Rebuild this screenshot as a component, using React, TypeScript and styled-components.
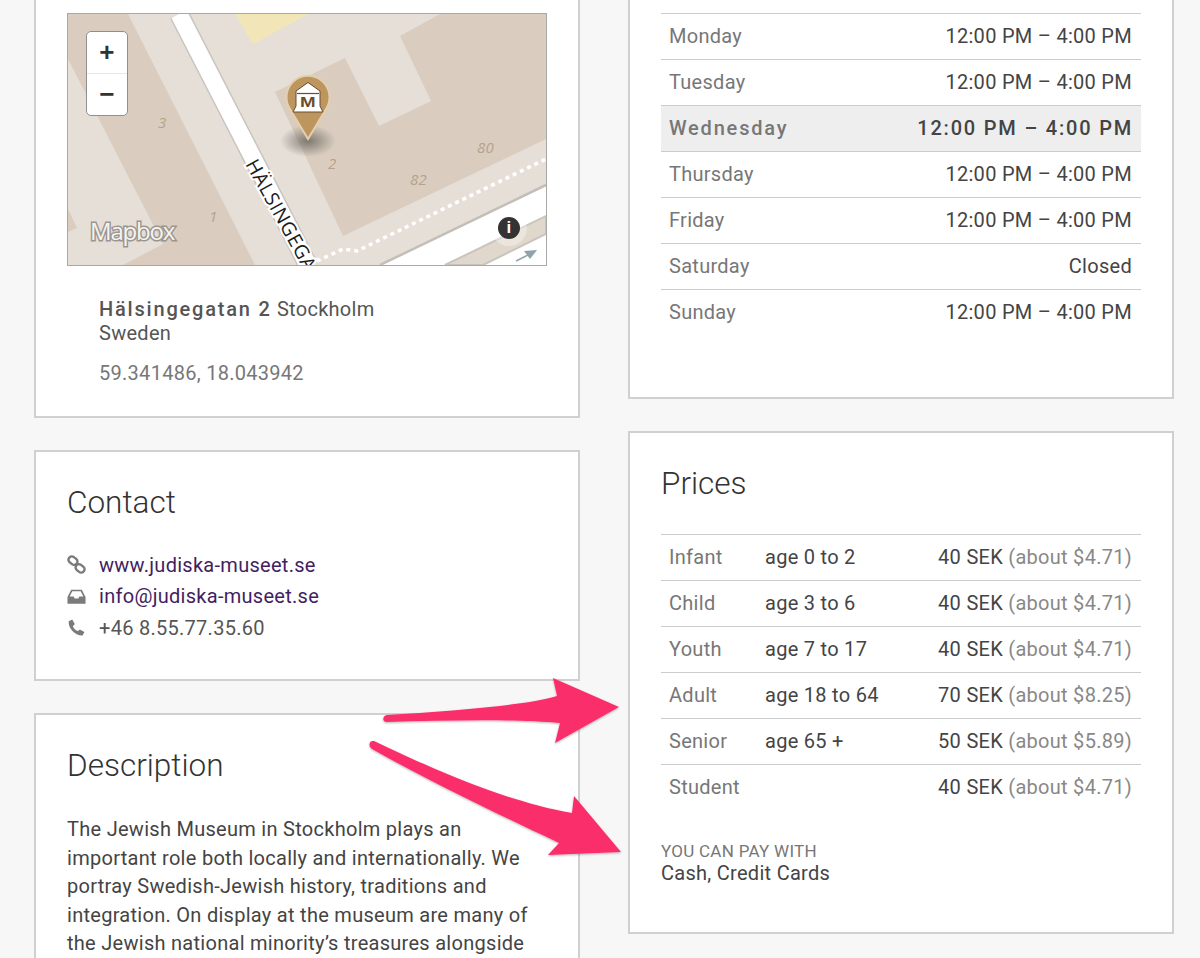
import React from "react";
import styled, { createGlobalStyle } from "styled-components";

const hours = [
  { day: "Monday", time: "12:00 PM – 4:00 PM" },
  { day: "Tuesday", time: "12:00 PM – 4:00 PM" },
  { day: "Wednesday", time: "12:00 PM – 4:00 PM", today: true },
  { day: "Thursday", time: "12:00 PM – 4:00 PM" },
  { day: "Friday", time: "12:00 PM – 4:00 PM" },
  { day: "Saturday", time: "Closed" },
  { day: "Sunday", time: "12:00 PM – 4:00 PM" },
];

const prices = [
  { name: "Infant", age: "age 0 to 2", price: "40 SEK", about: "(about $4.71)" },
  { name: "Child", age: "age 3 to 6", price: "40 SEK", about: "(about $4.71)" },
  { name: "Youth", age: "age 7 to 17", price: "40 SEK", about: "(about $4.71)" },
  { name: "Adult", age: "age 18 to 64", price: "70 SEK", about: "(about $8.25)" },
  { name: "Senior", age: "age 65 +", price: "50 SEK", about: "(about $5.89)" },
  { name: "Student", age: "", price: "40 SEK", about: "(about $4.71)" },
];

function MapDrawing() {
  return (
    <MapSvg viewBox="0 0 478 251" preserveAspectRatio="none">
      <rect width="478" height="251" fill="#e6dfd8" />
      <polygon points="0,0 60,0 187,251 55,251 95,230 0,45" fill="#dacdbf" />
      <polygon points="0,195 9,214 0,218" fill="#dacdbf" />
      <polygon points="167,0 240,0 185,30" fill="#f2e6b8" />
      <polygon points="207,78 277,44 311,112 363,87 332,22 372,0 478,0 478,125 275,222" fill="#dacdbf" />
      <line x1="111" y1="0" x2="240" y2="251" stroke="#c9c4bd" strokeWidth="20" />
      <line x1="111" y1="0" x2="240" y2="251" stroke="#ffffff" strokeWidth="17" />
      <polygon points="312,251 478,171 478,251" fill="#ffffff" />
      <polyline points="312,251 478,171" fill="none" stroke="#c3bfb8" strokeWidth="2.5" />
      <polyline points="249,247 275,235 289,237 478,145" fill="none" stroke="#ffffff" strokeWidth="3.5" strokeDasharray="4 4" />
      <polygon points="377,251 478,202 478,220 415,251" fill="#e0d8cd" stroke="#c9c4bd" strokeWidth="2" />
      <line x1="448" y1="247" x2="464" y2="239" stroke="#8ea3ab" strokeWidth="1.5" />
      <polygon points="469,236 456,237 462,245" fill="#8ea3ab" />
      <MapLabel x="90" y="114">3</MapLabel>
      <MapLabel x="141" y="208">1</MapLabel>
      <MapLabel x="260" y="155">2</MapLabel>
      <MapLabel x="342" y="171">82</MapLabel>
      <MapLabel x="409" y="139">80</MapLabel>
      <StreetLabel transform="translate(177 150) rotate(61)">HÄLSINGEGA</StreetLabel>
      <MapboxMark x="22" y="226">Mapbox</MapboxMark>
    </MapSvg>
  );
}

function Pin() {
  return (
    <PinSvg viewBox="0 0 56 84">
      <defs>
        <radialGradient id="pinShadow">
          <stop offset="0%" stopColor="#6f6a62" stopOpacity="0.85" />
          <stop offset="100%" stopColor="#6f6a62" stopOpacity="0" />
        </radialGradient>
      </defs>
      <ellipse cx="28" cy="69" rx="28" ry="16" fill="url(#pinShadow)" />
      <path d="M28 67 L10 37 A21.5 21.5 0 1 1 46 37 Z" fill="#bd955e" stroke="#e4cfae" strokeWidth="2" />
      <path d="M28 10.5 L40 19 V34 L43 40 H13 L16 34 V19 Z" fill="#ffffff" stroke="#6b4d2c" strokeWidth="1" />
      <path d="M17 21.5 H39" stroke="#6b4d2c" strokeWidth="1.2" />
      <PinLetter x="28" y="35" textLength="16" lengthAdjust="spacingAndGlyphs">M</PinLetter>
    </PinSvg>
  );
}

function LinkIcon() {
  return (
    <ContactSvg viewBox="0 0 20 20">
      <g fill="none" stroke="#7b7b7b" strokeWidth="2.6">
        <rect x="1.2" y="2.4" width="10" height="7" rx="3.5" transform="rotate(38 6.2 6)" />
        <rect x="8.8" y="10.6" width="10" height="7" rx="3.5" transform="rotate(38 13.8 14)" />
      </g>
    </ContactSvg>
  );
}

function InboxIcon() {
  return (
    <ContactSvg viewBox="0 0 20 20">
      <path d="M4.4 3 H15.6 L19.5 10.5 V17.5 H0.5 V10.5 Z M5.6 4.6 L2.8 10 H7 L8 12 H12 L13 10 H17.2 L14.4 4.6 Z" fill="#7b7b7b" fillRule="evenodd" />
    </ContactSvg>
  );
}

function PhoneIcon() {
  return (
    <ContactSvg viewBox="0 0 20 20">
      <path d="M5.5 1.5 L8.2 6.4 L6.2 8.6 C7 11 9.2 13 11.6 13.8 L13.6 12 L18.4 14.8 L16.4 18.4 C9 19 1 11 1.8 3.4 Z" fill="#7b7b7b" />
    </ContactSvg>
  );
}

function Arrows() {
  return (
    <ArrowSvg viewBox="0 0 1200 958">
      <defs>
        <filter id="arrowShadow" x="-5%" y="-5%" width="110%" height="110%">
          <feDropShadow dx="0" dy="1" stdDeviation="0.8" floodColor="#000" floodOpacity="0.3" />
        </filter>
      </defs>
      <g fill="#fb2e6c" filter="url(#arrowShadow)">
        <path d="M387 715 C450 711 530 705 557 696 L553 678 L619 707 L555 743 L560 723 C520 719 450 720 387 722 C382 722 382 716 387 715 Z" />
        <path d="M374 741 C430 768 510 803 572 813 L574 796 L621 852 L548 855 L559 843 C500 815 430 782 372 749 C368 746 369 740 374 741 Z" />
      </g>
    </ArrowSvg>
  );
}

export default function App() {
  return (
    <Page>
      <GlobalStyle />
      <Columns>
        <Column>
          <MapCard>
            <MapFrame>
              <MapDrawing />
              <ZoomControl>
                <ZoomButton>+</ZoomButton>
                <ZoomButton>−</ZoomButton>
              </ZoomControl>
              <PinSlot>
                <Pin />
              </PinSlot>
              <InfoBadge>i</InfoBadge>
            </MapFrame>
            <Address>
              <Street>Hälsingegatan 2</Street> Stockholm
              <br />
              Sweden
              <Coords>59.341486, 18.043942</Coords>
            </Address>
          </MapCard>
          <ContactCard>
            <Heading>Contact</Heading>
            <ContactList>
              <ContactRow>
                <LinkIcon />
                <ContactLink>www.judiska-museet.se</ContactLink>
              </ContactRow>
              <ContactRow>
                <InboxIcon />
                <ContactLink>info@judiska-museet.se</ContactLink>
              </ContactRow>
              <ContactRow>
                <PhoneIcon />
                <span>+46 8.55.77.35.60</span>
              </ContactRow>
            </ContactList>
          </ContactCard>
          <DescriptionCard>
            <Heading>Description</Heading>
            <Description>
              The Jewish Museum in Stockholm plays an
              <br />
              important role both locally and internationally. We
              <br />
              portray Swedish-Jewish history, traditions and
              <br />
              integration. On display at the museum are many of
              <br />
              the Jewish national minority’s treasures alongside
            </Description>
          </DescriptionCard>
        </Column>
        <Column>
          <HoursCard>
            <Table>
              {hours.map((h) => (
                <HoursRow key={h.day} $today={h.today}>
                  <RowLabel>{h.day}</RowLabel>
                  <span>{h.time}</span>
                </HoursRow>
              ))}
            </Table>
          </HoursCard>
          <PricesCard>
            <Heading>Prices</Heading>
            <PriceTable>
              {prices.map((p) => (
                <PriceRow key={p.name}>
                  <RowLabel>{p.name}</RowLabel>
                  <span>{p.age}</span>
                  <PriceCell>
                    {p.price} <About>{p.about}</About>
                  </PriceCell>
                </PriceRow>
              ))}
            </PriceTable>
            <PayLabel>YOU CAN PAY WITH</PayLabel>
            <PayValue>Cash, Credit Cards</PayValue>
          </PricesCard>
        </Column>
      </Columns>
      <Arrows />
    </Page>
  );
}

const GlobalStyle = createGlobalStyle`
  html, body {
    margin: 0;
    padding: 0;
    height: 958px;
    overflow: hidden;
    background: #f7f7f7;
  }
  body {
    font-family: Roboto, "Liberation Sans", sans-serif;
    font-size: 20px;
    letter-spacing: 0.28px;
    color: #444;
  }
`;

const Page = styled.div`
  position: relative;
  width: 1200px;
  height: 958px;
  overflow: hidden;
  background: #f7f7f7;
`;

const Columns = styled.div`
  display: grid;
  grid-template-columns: 546px 546px;
  column-gap: 48px;
  padding-left: 34px;
`;

const Column = styled.div`
  display: flex;
  flex-direction: column;
`;

const Card = styled.section`
  box-sizing: border-box;
  background: #fff;
  border: 2px solid #d0d0d0;
  padding: 0 31px;
`;

const MapCard = styled(Card)`
  height: 418px;
  border-top: 0;
  padding-top: 13px;
`;

const MapFrame = styled.div`
  position: relative;
  box-sizing: border-box;
  width: 480px;
  height: 253px;
  border: 1px solid #a8a8a8;
  overflow: hidden;
`;

const MapSvg = styled.svg`
  display: block;
  width: 100%;
  height: 100%;
`;

const MapLabel = styled.text`
  font-family: "Open Sans", sans-serif;
  font-style: italic;
  font-size: 15px;
  fill: #b5a28f;
`;

const StreetLabel = styled.text`
  font-family: "Open Sans", sans-serif;
  font-size: 19.5px;
  font-weight: 500;
  letter-spacing: 0.5px;
  fill: #1c1c1c;
  stroke: #fff;
  stroke-width: 4px;
  paint-order: stroke;
`;

const MapboxMark = styled.text`
  font-family: "Open Sans", sans-serif;
  font-size: 24px;
  font-weight: 500;
  letter-spacing: -1.2px;
  fill: #f6f3ef;
  stroke: #9a958f;
  stroke-width: 3px;
  paint-order: stroke;
`;

const ZoomControl = styled.div`
  position: absolute;
  top: 17px;
  left: 18px;
  box-sizing: border-box;
  width: 42px;
  height: 85px;
  display: flex;
  flex-direction: column;
  background: #fff;
  border: 1.5px solid #8f8f8f;
  border-radius: 5px;
`;

const ZoomButton = styled.div`
  flex: 1;
  display: flex;
  align-items: center;
  justify-content: center;
  font-family: "Liberation Sans", sans-serif;
  font-size: 26px;
  font-weight: 700;
  color: #333;
  & + & {
    border-top: 1px solid #e8e8e8;
  }
`;

const PinSlot = styled.div`
  position: absolute;
  top: 58px;
  left: 212px;
`;

const PinSvg = styled.svg`
  display: block;
  width: 56px;
  height: 84px;
`;

const PinLetter = styled.text`
  font-family: "Liberation Sans", sans-serif;
  font-size: 14px;
  font-weight: 700;
  fill: #6b4d2c;
  text-anchor: middle;
`;

const InfoBadge = styled.div`
  position: absolute;
  top: 203px;
  left: 430px;
  width: 22px;
  height: 22px;
  border-radius: 50%;
  background: #333;
  box-shadow: 0 0 0 7px rgba(255, 255, 255, 0.35);
  color: #fff;
  font-family: "Liberation Sans", sans-serif;
  font-size: 17px;
  font-weight: 700;
  line-height: 22px;
  text-align: center;
`;

const Address = styled.div`
  margin: 31px 0 0 32px;
  line-height: 24px;
  color: #555;
`;

const Street = styled.strong`
  font-weight: 500;
  letter-spacing: 1.8px;
`;

const Coords = styled.div`
  margin-top: 16px;
  color: #777;
`;

const ContactCard = styled(Card)`
  height: 231px;
  margin-top: 32px;
`;

const Heading = styled.h2`
  margin: 0;
  padding-top: 32px;
  font-size: 31.5px;
  line-height: 38px;
  font-weight: 300;
  letter-spacing: 0;
  color: #333;
`;

const ContactList = styled.div`
  margin-top: 27px;
  display: flex;
  flex-direction: column;
`;

const ContactRow = styled.div`
  display: flex;
  align-items: center;
  gap: 13px;
  height: 31.5px;
  color: #555;
`;

const ContactSvg = styled.svg`
  width: 19px;
  height: 19px;
  flex: none;
`;

const ContactLink = styled.a`
  color: #431e60;
`;

const DescriptionCard = styled(Card)`
  height: 300px;
  margin-top: 32px;
`;

const Description = styled.p`
  margin: 30px 0 0;
  line-height: 28.5px;
  color: #444;
`;

const HoursCard = styled(Card)`
  height: 399px;
  border-top: 0;
  padding-top: 13px;
`;

const Table = styled.div`
  display: flex;
  flex-direction: column;
`;

const HoursRow = styled.div<{ $today?: boolean }>`
  box-sizing: border-box;
  display: flex;
  justify-content: space-between;
  align-items: center;
  height: 46px;
  padding: 0 9px 2px 8px;
  color: #444;
  border-top: 1px solid #ccc;
  ${(p) =>
    p.$today &&
    `
    background: #eeeeee;
    font-weight: 500;
    letter-spacing: 1.8px;
    padding-right: 8px;
  `}
`;

const RowLabel = styled.span`
  color: #777;
`;

const PricesCard = styled(Card)`
  height: 503px;
  margin-top: 32px;
`;

const PriceTable = styled(Table)`
  margin-top: 31px;
`;

const PriceRow = styled.div`
  box-sizing: border-box;
  display: grid;
  grid-template-columns: 96px 1fr auto;
  align-items: center;
  height: 46px;
  padding: 0 9px 1px 8px;
  color: #444;
  border-top: 1px solid #ccc;
`;

const PriceCell = styled.span`
  text-align: right;
`;

const About = styled.span`
  color: #888;
`;

const PayLabel = styled.div`
  margin-top: 31px;
  font-size: 17px;
  line-height: 20px;
  color: #777;
`;

const PayValue = styled.div`
  line-height: 24px;
  color: #444;
`;

const ArrowSvg = styled.svg`
  position: absolute;
  top: 0;
  left: 0;
  width: 1200px;
  height: 958px;
  pointer-events: none;
`;
